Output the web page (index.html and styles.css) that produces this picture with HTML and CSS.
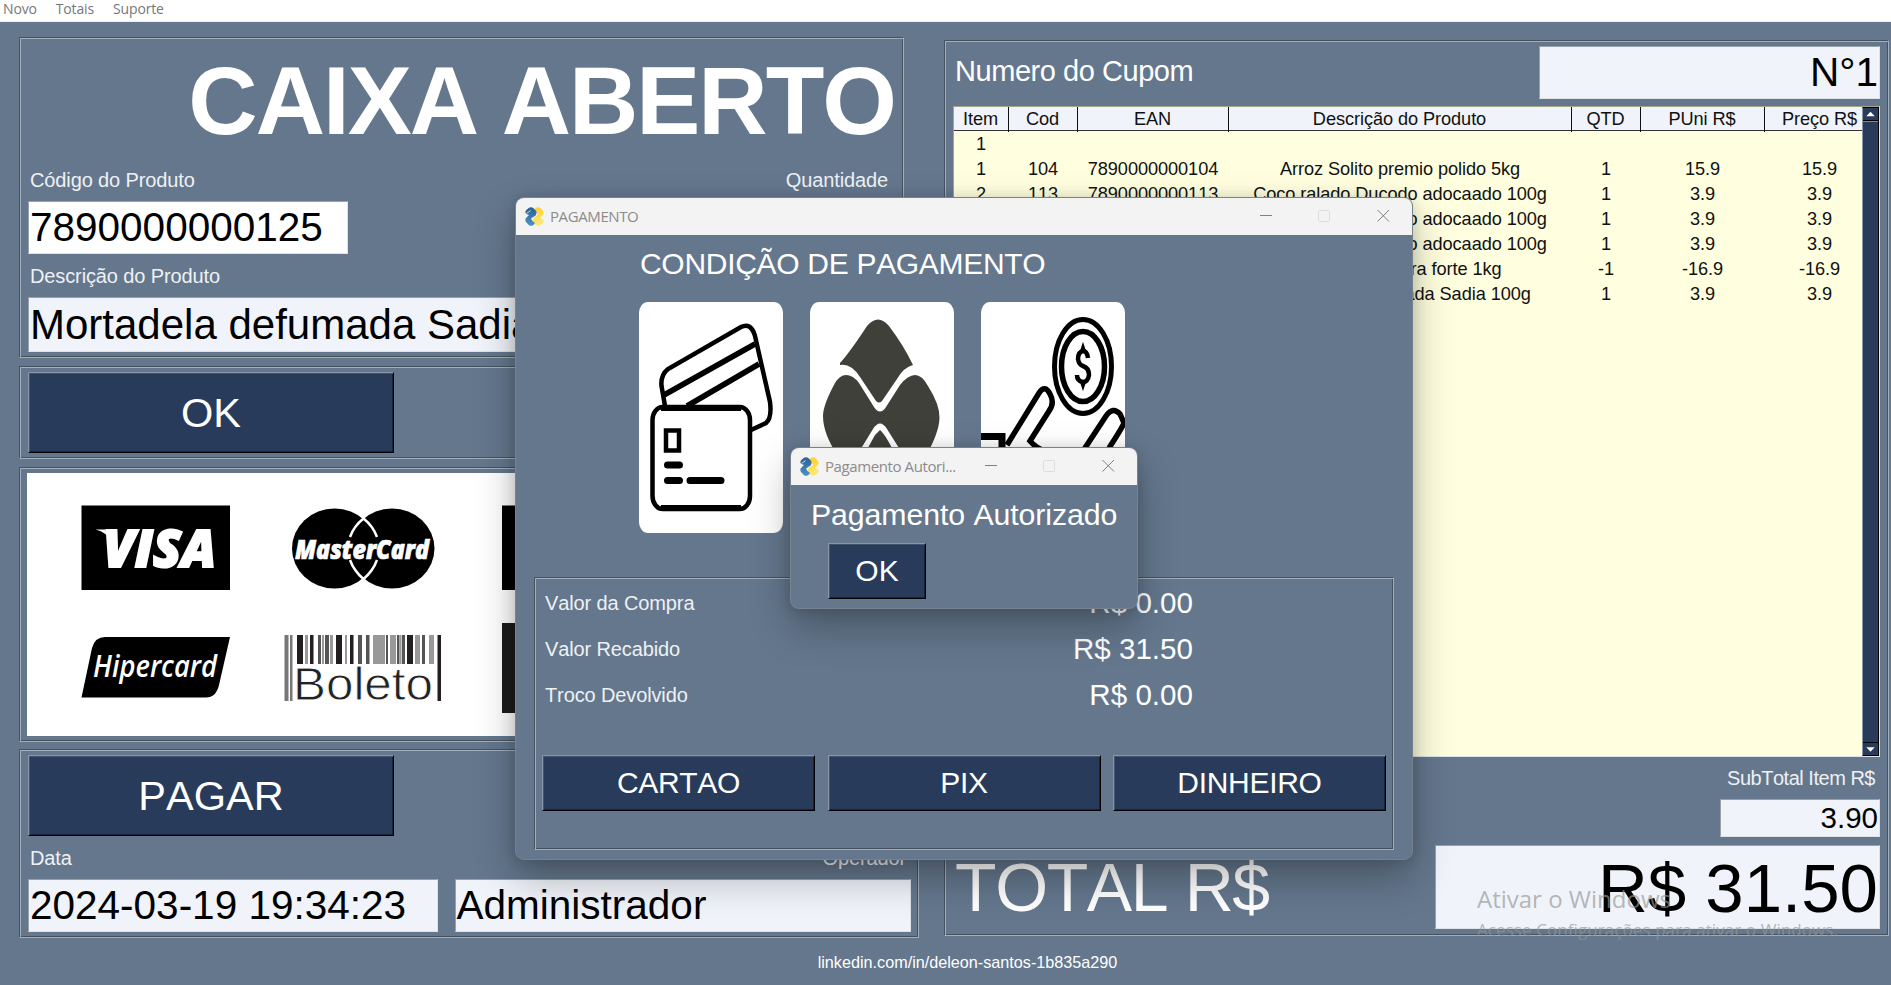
FILE: index.html
```html
<!DOCTYPE html>
<html lang="pt-BR">
<head>
<meta charset="utf-8">
<title>Caixa</title>
<link rel="stylesheet" href="styles.css">
</head>
<body>
<svg class="defs" width="0" height="0" aria-hidden="true">
  <defs>
    <linearGradient id="blue" x1="0" y1="0" x2="0" y2="1"><stop offset="0" stop-color="#2b5f91"/><stop offset="1" stop-color="#4b93c8"/></linearGradient>
    <linearGradient id="yellow" x1="0" y1="0" x2="0" y2="1"><stop offset="0" stop-color="#ffd030"/><stop offset="1" stop-color="#ffe873"/></linearGradient>
    <symbol id="logo" viewBox="0 0 19 19">
      <path fill="url(#yellow)" d="M11 .8Q13-.4 15 .8L18 4Q19 5.600 18.400 7.500L15 11L18 12.200Q19.200 14 18 15.800L14.500 18.600Q12.500 19.200 10.800 18L7.800 15Q7 13 8.600 11L13 7.800Q12.400 5 9.200 3.200Q9.400 1.600 11 .8Z"/>
      <path fill="url(#blue)" d="M8 .8Q6-.4 4 .8L1 3.200Q-.2 5 1 6.800L4 8L.6 11.500Q0 13.400 1 15L4 18.200Q6 19.400 8 18.200Q9.600 17.400 9.800 15.800Q6.600 14 6 11.600L10.600 8.400Q12.200 6 11.200 4Z"/>
      <path fill="none" stroke="#f3f3f3" stroke-width=".8" d="M1.600 6.400L5.600 3.600M17.400 12.600L13.600 15.400"/>
    </symbol>
  </defs>
</svg>

<nav class="menu"><span>Novo</span><span>Totais</span><span>Suporte</span></nav>

<main class="app">
  <section class="left">
    <div class="frame sale">
      <h1 class="status">CAIXA ABERTO</h1>
      <div class="labels"><span>Código do Produto</span><span>Quantidade</span></div>
      <div class="field code">7890000000125</div>
      <div class="labels second"><span>Descrição do Produto</span></div>
      <div class="field desc">Mortadela defumada Sadia 100g</div>
    </div>
    <div class="frame confirm"><button class="btn big">OK</button></div>
    <div class="frame brands">
      <svg class="brand-art" viewBox="27 473 870 263" width="870" height="263">
        <rect x="27" y="473" width="870" height="263" fill="#fff"/>
        <rect x="81.500" y="505.500" width="148.500" height="84.500"/>
        <text class="logo-text visa" x="103" y="567" font-size="51" textLength="113" lengthAdjust="spacingAndGlyphs">VISA</text>
        <path fill="#fff" d="M95.500 529.500H113L111 541Q107 532.500 95.500 529.500Z"/>
        <ellipse cx="334.500" cy="548.500" rx="42.500" ry="40"/>
        <ellipse cx="392" cy="548.500" rx="42.500" ry="40"/>
        <path fill="none" stroke="#fff" stroke-width="2.500" d="M350 537Q354 526 363.500 518.500Q373 526 377 537M350 560Q354 571 363.500 579Q373 571 377 560"/>
        <text class="logo-text master" x="295" y="558.500" font-size="26" textLength="134" lengthAdjust="spacingAndGlyphs">MasterCard</text>
        <path d="M105 637H230L219 685Q216 697.500 206 697.500H81.500L92 648Q95 637 105 637Z"/>
        <text class="logo-text hiper" x="93" y="676.500" font-size="31" textLength="124" lengthAdjust="spacingAndGlyphs">Hipercard</text>
        <g fill="#777"><path d="M284.500 635h4v66h-4zM290 635h2.500v66h-2.500z"/>
        <path fill="#231f20" d="M297 635h6v29h-6zM310 635h3.500v29h-3.500zM336 635h6v29h-6zM350 635h3.500v29h-3.500zM407 635h6v29h-6zM437.500 635h3.500v66h-3.500z"/>
        <path fill="#555" d="M318 635h3v29h-3zM325 635h4v29h-4zM358 635h4v29h-4zM366 635h3.500v29h-3.500zM386 635h2v29h-2zM397 635h2.500v29h-2.500zM402 635h3v29h-3zM422 635h3v29h-3z"/>
        <path fill="#999" d="M305 635h3v29h-3zM322 635h2v29h-2zM330 635h3v29h-3zM345 635h2v29h-2zM373 635h12v29h-12zM390 635h6v29h-6zM400 635h1.500v29h-1.500zM415 635h5v29h-5zM429 635h5v29h-5z"/></g>
        <text x="293" y="699.500" class="boleto" font-size="46" textLength="140" lengthAdjust="spacingAndGlyphs">Boleto</text>
        <rect x="502" y="505.500" width="148" height="84.500"/>
        <rect x="502" y="623" width="148" height="90" fill="#1c1c1c"/>
      </svg>
    </div>
    <div class="frame pay">
      <button class="btn big">PAGAR</button>
      <div class="labels"><span>Data</span><span>Operador</span></div>
      <div class="pair"><div class="field date">2024-03-19 19:34:23</div><div class="field oper">Administrador</div></div>
    </div>
  </section>

  <section class="frame right">
    <div class="coupon"><span>Numero do Cupom</span><div class="field num">N°1</div></div>
    <div class="table">
      <div class="rows">
        <div class="row head"><span>Item</span><span>Cod</span><span>EAN</span><span>Descrição do Produto</span><span>QTD</span><span>PUni R$</span><span>Preço R$</span></div>
        <div class="row"><span>1</span></div>
        <div class="row"><span>1</span><span>104</span><span>7890000000104</span><span>Arroz Solito premio polido 5kg</span><span>1</span><span>15.9</span><span>15.9</span></div>
        <div class="row"><span>2</span><span>113</span><span>7890000000113</span><span>Coco ralado Ducodo adocaado 100g</span><span>1</span><span>3.9</span><span>3.9</span></div>
        <div class="row"><span>3</span><span>113</span><span>7890000000113</span><span>Coco ralado Ducodo adocaado 100g</span><span>1</span><span>3.9</span><span>3.9</span></div>
        <div class="row"><span>4</span><span>113</span><span>7890000000113</span><span>Coco ralado Ducodo adocaado 100g</span><span>1</span><span>3.9</span><span>3.9</span></div>
        <div class="row"><span>5</span><span>103</span><span>7890000000103</span><span>Café Pilão extra forte 1kg</span><span>-1</span><span>-16.9</span><span>-16.9</span></div>
        <div class="row"><span>6</span><span>125</span><span>7890000000125</span><span>Mortadela defumada Sadia 100g</span><span>1</span><span>3.9</span><span>3.9</span></div>
      </div>
      <div class="scroll">
        <svg class="arrow" viewBox="0 0 16 12"><path d="M3.500 8.500L8 3.500L12.500 8.500Z"/></svg>
        <div class="thumb"></div>
        <svg class="arrow" viewBox="0 0 16 12"><path d="M3.500 4L8 9L12.500 4Z"/></svg>
      </div>
    </div>
    <div class="sub-label">SubTotal Item R$</div>
    <div class="field sub">3.90</div>
    <div class="total"><span>TOTAL R$</span><div class="field sum">R$ 31.50</div></div>
  </section>
</main>
<footer class="foot">linkedin.com/in/deleon-santos-1b835a290</footer>

<div class="window payment">
  <header class="bar"><svg class="app-icon"><use href="#logo"/></svg><span class="caption">PAGAMENTO</span>
    <svg class="controls" viewBox="0 0 130 14" width="130" height="14"><path class="c" d="M0 6.500H12M117.500 1L129 12.500M129 1L117.500 12.500"/><rect class="m" x="58.500" y="1.500" width="11" height="11" rx="1"/></svg></header>
  <h2 class="heading">CONDIÇÃO DE PAGAMENTO</h2>
  <div class="methods">
    <svg class="method" viewBox="0 0 144 231">
      <g fill="none" stroke="#000" stroke-width="4.500">
        <path d="M26 104L22.500 84Q21.500 73 29 67L102 25Q112 20 116 34L131 100Q133 116 127 121L112 128"/>
        <path stroke-width="5.500" d="M25 93L116 42M48 104L120 62"/>
        <rect fill="#fff" stroke="none" x="15" y="105" width="97" height="101" rx="10"/>
        <rect x="13.500" y="105" width="97.500" height="102" rx="10" ry="13"/>
        <path stroke-width="6" d="M22 106H102M22 206H102"/>
        <path d="M27 128.500h13v20H27z"/>
        <path stroke-width="7" stroke-linecap="round" d="M28.500 163H40.500M28.500 178.500H40.500M51 178.500H82"/>
      </g>
    </svg>
    <svg class="method" viewBox="0 0 144 231" fill="#40403a">
      <path d="M30 61Q40 50 57 24Q68 11 79 24Q94 44 103 63Q94 65 87 77L72 99Q69 102 66 99L50 75Q41 61 30 63Z"/>
      <path d="M36 73Q43 73 49 81L64 105Q70 114 76 105L90 83Q98 73 105 73Q112 73 118 84Q130 103 129.500 116Q129 132 114 157Q106 166 99 162L77 127Q70 116 63 127L44 158Q37 162 28 154Q13 132 13 114Q13 103 25 81Q30 73 36 73Z"/>
      <path d="M70 128Q75 132 84 150L98 172Q104 176 105 178L80 210Q70 220 60 210L34 176Q43 174 48 164L65 133Z"/>
    </svg>
    <svg class="method" viewBox="0 0 144 231">
      <g fill="none" stroke="#000" stroke-width="5.500">
        <ellipse cx="102" cy="64.500" rx="28.500" ry="47" stroke-width="5"/>
        <ellipse cx="102" cy="64.500" rx="21.500" ry="35"/>
        <path d="M26 143L58 91Q64 82 69 92Q74 101 68 109L49 139Q55 146 64 149M102 149L125 114Q132 104 139 112L143 121Q141 126 128 146"/>
        <path stroke-width="7" d="M0 134.500H21V160"/>
        <path stroke-width="4.500" d="M107 56Q106 49 102 49Q97 50 97 57Q98 63 102 64Q108 66 108 73Q107 80 102 80Q96 79 96 73"/>
        <path stroke-width="2" fill="#000" d="M102 43L104 49H100ZM102 86L104 80H100Z"/>
      </g>
    </svg>
  </div>
  <div class="frame amounts">
    <div class="line"><span>Valor da Compra</span><b>R$ 0.00</b></div>
    <div class="line"><span>Valor Recabido</span><b>R$ 31.50</b></div>
    <div class="line"><span>Troco Devolvido</span><b>R$ 0.00</b></div>
    <div class="actions"><button class="btn">CARTAO</button><button class="btn">PIX</button><button class="btn">DINHEIRO</button></div>
  </div>
</div>

<div class="window notice">
  <header class="bar"><svg class="app-icon"><use href="#logo"/></svg><span class="caption">Pagamento Autori...</span>
    <svg class="controls" viewBox="0 0 130 14" width="130" height="14"><path class="c" d="M0 6.500H12M117.500 1L129 12.500M129 1L117.500 12.500"/><rect class="m" x="58.500" y="1.500" width="11" height="11" rx="1"/></svg></header>
  <p class="message">Pagamento Autorizado</p>
  <button class="btn ok">OK</button>
</div>

<div class="watermark"><div class="wm-title">Ativar o Windows</div><div class="wm-text">Acesse Configurações para ativar o Windows.</div></div>
</body>
</html>
```
FILE: styles.css
```css
* { box-sizing: border-box; }
:root { --bg: #64778d; --dark: #46535f; --light: #a4afbd; --navy: #283b5b; --pale: #f0f3f9; }
body {
  margin: 0; width: 1891px; height: 985px; overflow: hidden; position: relative;
  background: var(--bg); color: #fff; font: 20px/24px "Liberation Sans", Arial, sans-serif;
  display: flex; flex-direction: column; font-kerning: none; white-space: nowrap;
}
h1, h2, p { margin: 0; font-weight: 400; }
.defs { position: absolute; }
.menu {
  flex: none; height: 22px; background: #fff; border-bottom: 1px solid #eee; color: #777;
  display: flex; gap: 19px; padding-left: 3px;
  font: 14px/18px "Open Sans", "Noto Sans", sans-serif; letter-spacing: -.15px;
}
.app { flex: none; height: 918px; display: flex; align-items: flex-start; padding-left: 19px; }
.frame {
  border: 1px solid; border-color: var(--dark) var(--light) var(--light) var(--dark);
  box-shadow: inset 1px 1px 0 var(--light), inset -1px -1px 0 var(--dark);
}
.left { width: 925px; flex: none; padding-top: 15px; display: flex; flex-direction: column; align-items: flex-start; }
.sale { width: 885px; height: 321px; padding: 7px 8px 0; }
.status { height: 106px; font-weight: 700; font-size: 96px; line-height: 111px; text-align: right; letter-spacing: -2px; }
.labels { display: flex; justify-content: space-between; height: 50px; line-height: 58px; padding: 0 7px 0 2px; color: #eef1f4; letter-spacing: -.12px; }
.labels.second { height: 43px; line-height: 44px; }
.field {
  color: #000; background: var(--pale); border: 1px solid; border-color: #98a0a8 #dfe3e8 #dfe3e8 #98a0a8;
  font-size: 40.500px; line-height: 51px; padding: 0 1px; height: 53px; overflow: hidden;
}
.code { width: 320px; background: #fff; }
.desc { width: 860px; height: 55px; line-height: 54px; font-size: 42px; }
.confirm { width: 885px; height: 93px; margin-top: 8px; padding: 5px 8px; }
.btn {
  display: block; height: 56px; background: var(--navy); color: #fff; font: inherit; font-size: 30px; padding: 0; text-align: center;
  border: 1px solid; border-color: #8996a8 #000 #000 #8996a8; box-shadow: inset 1px 1px 0 #43546f, inset -1px -1px 0 #17243a;
}
.btn.big { width: 366px; height: 81px; font-size: 41.500px; }
.brands { width: 885px; height: 275px; margin-top: 8px; padding: 5px 7px; }
.brand-art { display: block; }
.logo-text { fill: #fff; font-family: "Open Sans", "Noto Sans", sans-serif; font-weight: 800; font-style: italic; stroke: #fff; stroke-width: 0; }
.visa { stroke-width: 2px; }
.master { stroke-width: .7px; }
.hiper { font-weight: 600; }
.boleto { fill: #222; font-family: "Liberation Sans", Arial, sans-serif; stroke: #fff; stroke-width: .8px; }
.pay { width: 900px; height: 189px; margin-top: 7px; padding: 5px 7px 0 8px; }
.pay .labels { height: 43px; line-height: 45px; padding-right: 5px; }
.pair { display: flex; gap: 17px; }
.date { width: 410px; }
.oper { width: 457px; }
.right { width: 945px; height: 896px; margin-top: 18px; padding: 5px 8px 0; }
.coupon { display: flex; justify-content: space-between; font-size: 29px; letter-spacing: -.45px; line-height: 51px; padding-left: 2px; }
.num { width: 341px; text-align: right; letter-spacing: 0; }
.table {
  margin-top: 7px; height: 651px; display: flex; color: #111; background: #ffffdf;
  border: 1px solid; border-color: #a5a58c #dfe3e8 #dfe3e8 #a5a58c; font-size: 18.200px; letter-spacing: -.08px;
}
.rows { width: 909px; overflow: hidden; flex: none; }
.row { display: grid; grid-template-columns: 55px 69px 151px 343px 69px 124px 110px; height: 25px; line-height: 26px; text-align: center; }
.row span { padding-right: 1px; }
.head { height: 24px; line-height: 25px; background: var(--pale); border-bottom: 1px solid #333; }
.head span { border-right: 1px solid #111; }
.head span:last-child { border: 0; }
.scroll { width: 17px; margin-left: -1px; display: flex; flex-direction: column; background: var(--navy); border: 1px solid #000; border-left-color: #8996a8; }
.arrow { width: 15px; height: 12px; fill: #fff; }
.thumb { flex: 1; border: solid #000; border-width: 1px 0; box-shadow: inset 0 1px 0 #7c8a9e; }
.sub-label { height: 42px; line-height: 43px; text-align: right; padding-right: 5px; color: #eef1f4; letter-spacing: -.48px; }
.sub { width: 160px; height: 38px; font-size: 29.500px; line-height: 35px; margin-left: auto; text-align: right; }
.total { display: flex; justify-content: space-between; font-size: 68px; letter-spacing: -1.400px; margin-top: 8px; line-height: 84px; padding-left: 2px; }
.sum { width: 445px; height: 84px; font-size: 69px; line-height: 86px; text-align: right; letter-spacing: 0; }
.foot { text-align: center; font-size: 16.200px; line-height: 45px; padding-left: 46px; margin-right: 2px; align-self: center; }

.window {
  position: absolute; background: var(--bg); border: 1px solid #77828f; border-radius: 9px;
  display: flex; flex-direction: column; overflow: hidden;
  box-shadow: 0 18px 40px rgba(0, 0, 0, .28), 0 1px 14px rgba(0, 0, 0, .14);
}
.payment { left: 515px; top: 197px; width: 898px; height: 663px; }
.notice { left: 790px; top: 447px; width: 348px; height: 162px; }
.bar { flex: none; height: 37px; background: #f3f3f3; color: #8b8b8b; display: flex; align-items: center; padding: 0 22px 0 9px; font: 15px/34px "Open Sans", "Noto Sans", sans-serif; letter-spacing: -.4px; }
.caption { padding-bottom: 2px; }
.app-icon { width: 19px; height: 19px; margin-right: 6px; margin-bottom: 1px; }
.controls { margin-left: auto; margin-bottom: 1px; fill: none; }
.controls .c { stroke: #808080; }
.controls .m { stroke: #ddd; }
.heading { margin: 11px 0 0 124px; font-size: 30px; letter-spacing: -.3px; line-height: 35px; height: 56px; }
.methods { display: flex; gap: 27px; margin-left: 123px; }
.method { width: 144px; height: 231px; background: #fff; border-radius: 9px / 11px; }
.amounts { margin: 44px 0 0 18px; width: 860px; height: 273px; padding: 1px 7px 0; }
.line { display: flex; justify-content: space-between; align-items: center; height: 46px; padding: 1px 193px 0 3px; color: #eef1f4; letter-spacing: -.12px; }
.line b { font-weight: 400; font-size: 29.600px; color: #fff; letter-spacing: 0; }
.actions { display: flex; justify-content: space-between; margin-top: 38px; }
.actions .btn { width: 273px; letter-spacing: -.3px; }
.message { font-size: 30.300px; letter-spacing: -.1px; line-height: 36px; margin: 12px 0 0 20px; height: 46px; }
.ok { width: 98px; margin-left: 37px; flex: none; }
.watermark { position: absolute; left: 1477px; top: 880px; color: rgba(150, 150, 150, .68); font-family: "Open Sans", "Noto Sans", sans-serif; }
.wm-title { font-size: 24px; line-height: 38px; }
.wm-text { font-size: 17px; line-height: 24px; letter-spacing: .08px; }
```
